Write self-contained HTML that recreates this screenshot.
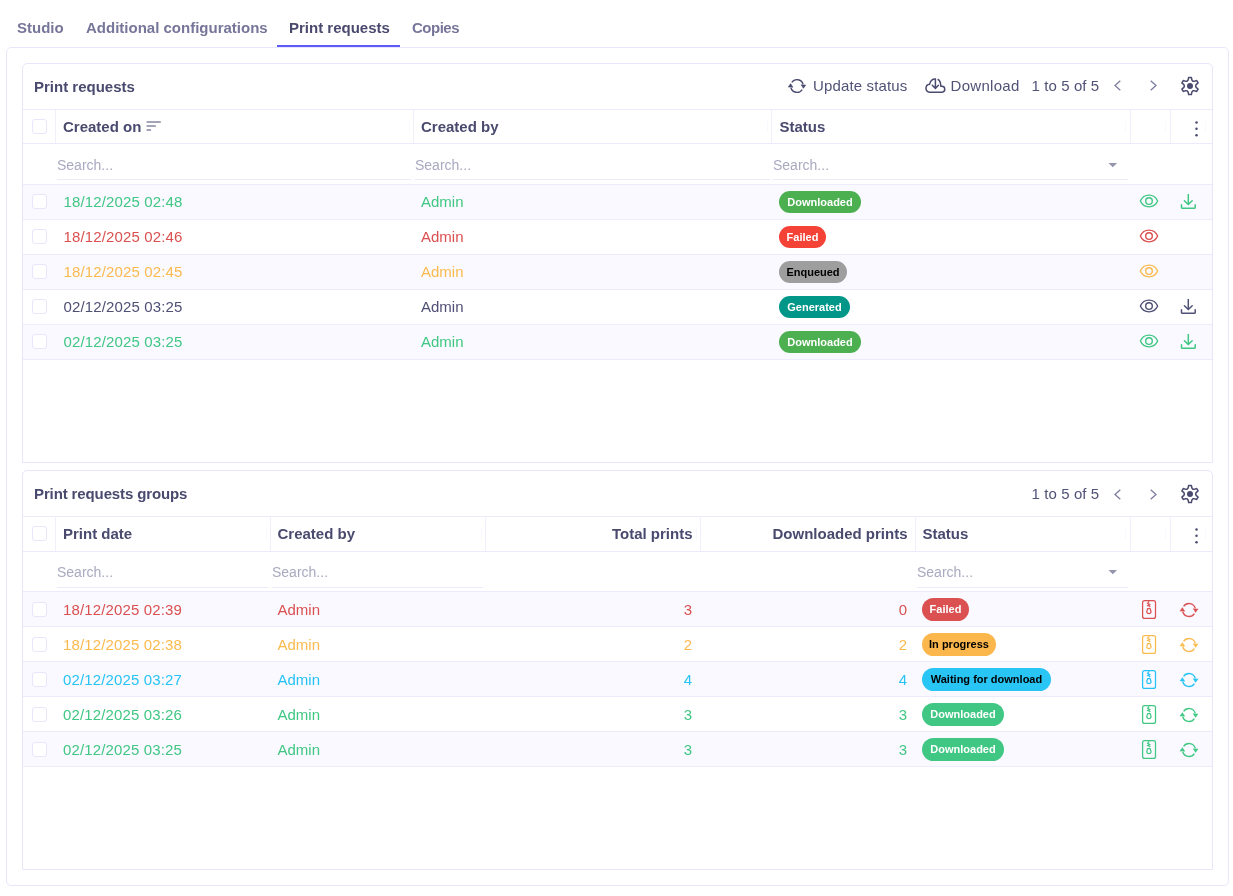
<!DOCTYPE html>
<html><head><meta charset="utf-8"><style>
html,body{margin:0;padding:0;background:#fff;width:1233px;height:896px;overflow:hidden;position:relative}
.a{position:absolute;}
.t{font-family:"Liberation Sans",sans-serif;white-space:nowrap}
svg.a{overflow:visible}
.badge{font:700 11px/22px "Liberation Sans",sans-serif;text-align:center;white-space:nowrap}
</style></head><body>
<div id="root" style="position:absolute;left:0;top:0;width:1233px;height:896px;will-change:transform">
<div class="a t" style="left:17px;top:20px;font-size:15px;line-height:15px;font-weight:700;color:#75769a;">Studio</div>
<div class="a t" style="left:86px;top:20px;font-size:15px;line-height:15px;font-weight:700;color:#75769a;">Additional configurations</div>
<div class="a t" style="left:289px;top:20px;font-size:15px;line-height:15px;font-weight:700;color:#494a6e;">Print requests</div>
<div class="a t" style="left:412px;top:20px;font-size:15px;line-height:15px;font-weight:700;color:#75769a;letter-spacing:-0.5px">Copies</div>
<div class="a" style="left:6px;top:47px;width:1223px;height:839px;border:1px solid #e7e6fb;box-sizing:border-box;border-radius:5px;"></div>
<div class="a" style="left:277px;top:45px;width:123px;height:2px;background:#5d5bf7;"></div>
<div class="a" style="left:22px;top:63px;width:1191px;height:400px;background:#fff;border:1px solid #e7e6fb;box-sizing:border-box;border-radius:5px 5px 0 0;"></div>
<div class="a t" style="left:34px;top:79px;font-size:15px;line-height:15px;font-weight:700;color:#494a6e;letter-spacing:0px">Print requests</div>
<svg class="a" style="left:787.1px;top:76.2px;" width="20" height="20" viewBox="0 0 20 20"><path d="M4.78 6.48 A6.3 6.3 0 0 1 16.06 8.26" fill="none" stroke="#4a4b6e" stroke-width="1.35"/><path d="M15.22 13.52 A6.3 6.3 0 0 1 3.94 11.74" fill="none" stroke="#4a4b6e" stroke-width="1.35"/><path d="M13.95 8.70 L18.85 8.90 L16.40 12.40 Z" fill="#4a4b6e" stroke="#4a4b6e" stroke-width="0.4" stroke-linejoin="round"/><path d="M1.15 11.10 L6.05 11.30 L3.60 7.60 Z" fill="#4a4b6e" stroke="#4a4b6e" stroke-width="0.4" stroke-linejoin="round"/></svg>
<div class="a t" style="left:813px;top:78px;font-size:15px;line-height:15px;font-weight:400;color:#515276;letter-spacing:0.15px">Update status</div>
<svg class="a" style="left:921px;top:73px;" width="26" height="24" viewBox="0 0 26 24"><path d="M16.6 6.3 C18.7 7.2 19.8 9.6 19.8 13.3 L20.6 13.3 A2.95 2.95 0 0 1 21 19.2 H8.2 A4 4 0 0 1 8.6 11.3 C9.3 8.2 11.4 6 14.4 6.1" fill="none" stroke="#4a4b6e" stroke-width="1.5" stroke-linejoin="round"/><path d="M14.4 6.1 V15.3 M11.3 12.2 L14.4 15.4 L17.4 12.2" fill="none" stroke="#4a4b6e" stroke-width="1.5" stroke-linecap="round"/></svg>
<div class="a t" style="left:950.5px;top:78px;font-size:15px;line-height:15px;font-weight:400;color:#515276;letter-spacing:0.3px">Download</div>
<div class="a t" style="left:1031.5px;top:78px;font-size:15px;line-height:15px;font-weight:400;color:#515276;letter-spacing:0.1px">1 to 5 of 5</div>
<svg class="a" style="left:1113.6px;top:80.1px;" width="7" height="11" viewBox="0 0 7 11"><path d="M6.3 0.7 L1 5.5 L6.3 10.3" fill="none" stroke="#7c7d9c" stroke-width="1.3"/></svg>
<svg class="a" style="left:1149.8px;top:80.1px;" width="7" height="11" viewBox="0 0 7 11"><path d="M0.7 0.7 L6 5.5 L0.7 10.3" fill="none" stroke="#7c7d9c" stroke-width="1.3"/></svg>
<svg class="a" style="left:1179.8px;top:75.8px;" width="20" height="20" viewBox="0 0 20 20"><path d="M8.10 4.00 L8.65 1.45 L11.35 1.45 L11.90 4.00 L12.80 5.15 L14.25 5.35 L16.73 4.56 L18.08 6.89 L16.15 8.65 L15.60 10.00 L16.15 11.35 L18.08 13.11 L16.73 15.44 L14.25 14.65 L12.80 14.85 L11.90 16.00 L11.35 18.55 L8.65 18.55 L8.10 16.00 L7.20 14.85 L5.75 14.65 L3.27 15.44 L1.92 13.11 L3.85 11.35 L4.40 10.00 L3.85 8.65 L1.92 6.89 L3.27 4.56 L5.75 5.35 L7.20 5.15 Z" fill="none" stroke="#4a4b6e" stroke-width="1.5" stroke-linejoin="round"/><circle cx="10" cy="10" r="3" fill="#4a4b6e"/></svg>
<div class="a" style="left:23px;top:109px;width:1189px;height:1px;background:#ecebfc;"></div>
<div class="a" style="left:23px;top:143px;width:1189px;height:1px;background:#ecebfc;"></div>
<div class="a" style="left:55px;top:110px;width:1px;height:33px;background:#f0f0fc;"></div>
<div class="a" style="left:413px;top:110px;width:1px;height:33px;background:#f0f0fc;"></div>
<div class="a" style="left:771px;top:110px;width:1px;height:33px;background:#f0f0fc;"></div>
<div class="a" style="left:1130px;top:110px;width:1px;height:33px;background:#f0f0fc;"></div>
<div class="a" style="left:1170px;top:110px;width:1px;height:33px;background:#f0f0fc;"></div>
<div class="a" style="left:409px;top:121px;width:1px;height:11px;background:#f8f8fe;"></div>
<div class="a" style="left:767px;top:121px;width:1px;height:11px;background:#f8f8fe;"></div>
<div class="a" style="left:1125px;top:121px;width:1px;height:11px;background:#f8f8fe;"></div>
<div class="a" style="left:1165px;top:121px;width:1px;height:11px;background:#f8f8fe;"></div>
<div class="a" style="left:1205px;top:121px;width:1px;height:11px;background:#f8f8fe;"></div>
<div class="a" style="left:32px;top:119px;width:15px;height:15px;background:#fff;border:1px solid #e7e6fb;box-sizing:border-box;border-radius:3px;"></div>
<div class="a t" style="left:63px;top:119px;font-size:15px;line-height:15px;font-weight:700;color:#494a6e;">Created on</div>
<div class="a t" style="left:421px;top:119px;font-size:15px;line-height:15px;font-weight:700;color:#494a6e;">Created by</div>
<div class="a t" style="left:779.5px;top:119px;font-size:15px;line-height:15px;font-weight:700;color:#494a6e;">Status</div>
<svg class="a" style="left:1195px;top:120.8px;" width="4" height="16" viewBox="0 0 4 16"><circle cx="1.5" cy="1.50" r="1.25" fill="#4a4b6e"/><circle cx="1.5" cy="7.85" r="1.25" fill="#4a4b6e"/><circle cx="1.5" cy="14.20" r="1.25" fill="#4a4b6e"/></svg>
<div class="a" style="left:23px;top:184px;width:1189px;height:1px;background:#ecebfc;"></div>
<div class="a" style="left:57px;top:179px;width:354px;height:1px;background:#ecebfc;"></div>
<div class="a t" style="left:57px;top:158px;font-size:14px;line-height:14px;font-weight:400;color:#a9a9c0;">Search...</div>
<div class="a" style="left:415px;top:179px;width:355px;height:1px;background:#ecebfc;"></div>
<div class="a t" style="left:415px;top:158px;font-size:14px;line-height:14px;font-weight:400;color:#a9a9c0;">Search...</div>
<div class="a" style="left:773px;top:179px;width:355px;height:1px;background:#ecebfc;"></div>
<div class="a t" style="left:773px;top:158px;font-size:14px;line-height:14px;font-weight:400;color:#a9a9c0;">Search...</div>
<svg class="a" style="left:1108px;top:163px;" width="10" height="6" viewBox="0 0 10 6"><path d="M0.5 0 H9.1 L4.8 4.3 Z" fill="#9494ad"/></svg>
<div class="a" style="left:23px;top:185px;width:1189px;height:34px;background:#f9f9ff;"></div>
<div class="a" style="left:23px;top:219px;width:1189px;height:1px;background:#ecebfc;"></div>
<div class="a" style="left:32px;top:194px;width:15px;height:15px;background:#fff;border:1px solid #e7e6fb;box-sizing:border-box;border-radius:3px;"></div>
<div class="a t" style="left:63.5px;top:194px;font-size:15px;line-height:15px;font-weight:400;color:#40c783;letter-spacing:0.14px">18/12/2025 02:48</div>
<div class="a t" style="left:421px;top:194px;font-size:15px;line-height:15px;font-weight:400;color:#40c783;">Admin</div>
<div class="a badge" style="left:779px;top:191px;width:82px;height:22px;border-radius:11.0px;background:#4caf50;color:#fff">Downloaded</div>
<svg class="a" style="left:1137.8px;top:193.2px;" width="22" height="16" viewBox="0 0 22 16"><path d="M19.65 8.00 C17.73 12.19 14.84 13.85 11.00 13.85 C7.16 13.85 4.27 12.19 2.35 8.00 C4.27 3.81 7.16 2.15 11.00 2.15 C14.84 2.15 17.73 3.81 19.65 8.00 Z" fill="none" stroke="#40c783" stroke-width="1.4" stroke-linejoin="round"/><circle cx="11" cy="8.1" r="3.3" fill="none" stroke="#40c783" stroke-width="1.4"/></svg>
<svg class="a" style="left:1180px;top:193px;" width="17" height="17" viewBox="0 0 17 17"><path d="M8.3 1 V11.3" stroke="#40c783" stroke-width="1.5" fill="none"/><path d="M4.4 7.7 L8.3 11.5 L12.2 7.7" stroke="#40c783" stroke-width="1.5" fill="none" stroke-linecap="round"/><path d="M1.5 11.8 V14.4 Q1.5 15.35 2.5 15.35 H14.2 Q15.2 15.35 15.2 14.4 V11.8" stroke="#40c783" stroke-width="1.5" fill="none" stroke-linecap="round"/></svg>
<div class="a" style="left:23px;top:254px;width:1189px;height:1px;background:#ecebfc;"></div>
<div class="a" style="left:32px;top:229px;width:15px;height:15px;background:#fff;border:1px solid #e7e6fb;box-sizing:border-box;border-radius:3px;"></div>
<div class="a t" style="left:63.5px;top:229px;font-size:15px;line-height:15px;font-weight:400;color:#db5050;letter-spacing:0.14px">18/12/2025 02:46</div>
<div class="a t" style="left:421px;top:229px;font-size:15px;line-height:15px;font-weight:400;color:#db5050;">Admin</div>
<div class="a badge" style="left:779px;top:226px;width:47px;height:22px;border-radius:11.0px;background:#f44336;color:#fff">Failed</div>
<svg class="a" style="left:1137.8px;top:228.2px;" width="22" height="16" viewBox="0 0 22 16"><path d="M19.65 8.00 C17.73 12.19 14.84 13.85 11.00 13.85 C7.16 13.85 4.27 12.19 2.35 8.00 C4.27 3.81 7.16 2.15 11.00 2.15 C14.84 2.15 17.73 3.81 19.65 8.00 Z" fill="none" stroke="#db5050" stroke-width="1.4" stroke-linejoin="round"/><circle cx="11" cy="8.1" r="3.3" fill="none" stroke="#db5050" stroke-width="1.4"/></svg>
<div class="a" style="left:23px;top:255px;width:1189px;height:34px;background:#f9f9ff;"></div>
<div class="a" style="left:23px;top:289px;width:1189px;height:1px;background:#ecebfc;"></div>
<div class="a" style="left:32px;top:264px;width:15px;height:15px;background:#fff;border:1px solid #e7e6fb;box-sizing:border-box;border-radius:3px;"></div>
<div class="a t" style="left:63.5px;top:264px;font-size:15px;line-height:15px;font-weight:400;color:#fbba4e;letter-spacing:0.14px">18/12/2025 02:45</div>
<div class="a t" style="left:421px;top:264px;font-size:15px;line-height:15px;font-weight:400;color:#fbba4e;">Admin</div>
<div class="a badge" style="left:779px;top:261px;width:68px;height:22px;border-radius:11.0px;background:#9e9e9e;color:#000">Enqueued</div>
<svg class="a" style="left:1137.8px;top:263.2px;" width="22" height="16" viewBox="0 0 22 16"><path d="M19.65 8.00 C17.73 12.19 14.84 13.85 11.00 13.85 C7.16 13.85 4.27 12.19 2.35 8.00 C4.27 3.81 7.16 2.15 11.00 2.15 C14.84 2.15 17.73 3.81 19.65 8.00 Z" fill="none" stroke="#fbba4e" stroke-width="1.4" stroke-linejoin="round"/><circle cx="11" cy="8.1" r="3.3" fill="none" stroke="#fbba4e" stroke-width="1.4"/></svg>
<div class="a" style="left:23px;top:324px;width:1189px;height:1px;background:#ecebfc;"></div>
<div class="a" style="left:32px;top:299px;width:15px;height:15px;background:#fff;border:1px solid #e7e6fb;box-sizing:border-box;border-radius:3px;"></div>
<div class="a t" style="left:63.5px;top:299px;font-size:15px;line-height:15px;font-weight:400;color:#4f5075;letter-spacing:0.14px">02/12/2025 03:25</div>
<div class="a t" style="left:421px;top:299px;font-size:15px;line-height:15px;font-weight:400;color:#4f5075;">Admin</div>
<div class="a badge" style="left:779px;top:296px;width:71px;height:22px;border-radius:11.0px;background:#009688;color:#fff">Generated</div>
<svg class="a" style="left:1137.8px;top:298.2px;" width="22" height="16" viewBox="0 0 22 16"><path d="M19.65 8.00 C17.73 12.19 14.84 13.85 11.00 13.85 C7.16 13.85 4.27 12.19 2.35 8.00 C4.27 3.81 7.16 2.15 11.00 2.15 C14.84 2.15 17.73 3.81 19.65 8.00 Z" fill="none" stroke="#4f5075" stroke-width="1.4" stroke-linejoin="round"/><circle cx="11" cy="8.1" r="3.3" fill="none" stroke="#4f5075" stroke-width="1.4"/></svg>
<svg class="a" style="left:1180px;top:298px;" width="17" height="17" viewBox="0 0 17 17"><path d="M8.3 1 V11.3" stroke="#4f5075" stroke-width="1.5" fill="none"/><path d="M4.4 7.7 L8.3 11.5 L12.2 7.7" stroke="#4f5075" stroke-width="1.5" fill="none" stroke-linecap="round"/><path d="M1.5 11.8 V14.4 Q1.5 15.35 2.5 15.35 H14.2 Q15.2 15.35 15.2 14.4 V11.8" stroke="#4f5075" stroke-width="1.5" fill="none" stroke-linecap="round"/></svg>
<div class="a" style="left:23px;top:325px;width:1189px;height:34px;background:#f9f9ff;"></div>
<div class="a" style="left:23px;top:359px;width:1189px;height:1px;background:#ecebfc;"></div>
<div class="a" style="left:32px;top:334px;width:15px;height:15px;background:#fff;border:1px solid #e7e6fb;box-sizing:border-box;border-radius:3px;"></div>
<div class="a t" style="left:63.5px;top:334px;font-size:15px;line-height:15px;font-weight:400;color:#40c783;letter-spacing:0.14px">02/12/2025 03:25</div>
<div class="a t" style="left:421px;top:334px;font-size:15px;line-height:15px;font-weight:400;color:#40c783;">Admin</div>
<div class="a badge" style="left:779px;top:331px;width:82px;height:22px;border-radius:11.0px;background:#4caf50;color:#fff">Downloaded</div>
<svg class="a" style="left:1137.8px;top:333.2px;" width="22" height="16" viewBox="0 0 22 16"><path d="M19.65 8.00 C17.73 12.19 14.84 13.85 11.00 13.85 C7.16 13.85 4.27 12.19 2.35 8.00 C4.27 3.81 7.16 2.15 11.00 2.15 C14.84 2.15 17.73 3.81 19.65 8.00 Z" fill="none" stroke="#40c783" stroke-width="1.4" stroke-linejoin="round"/><circle cx="11" cy="8.1" r="3.3" fill="none" stroke="#40c783" stroke-width="1.4"/></svg>
<svg class="a" style="left:1180px;top:333px;" width="17" height="17" viewBox="0 0 17 17"><path d="M8.3 1 V11.3" stroke="#40c783" stroke-width="1.5" fill="none"/><path d="M4.4 7.7 L8.3 11.5 L12.2 7.7" stroke="#40c783" stroke-width="1.5" fill="none" stroke-linecap="round"/><path d="M1.5 11.8 V14.4 Q1.5 15.35 2.5 15.35 H14.2 Q15.2 15.35 15.2 14.4 V11.8" stroke="#40c783" stroke-width="1.5" fill="none" stroke-linecap="round"/></svg>
<svg class="a" style="left:146px;top:121.05px;" width="16" height="10" viewBox="0 0 16 10"><path d="M1 1 H14.4 M1 5 H9.4 M1 9 H4.6" stroke="#494a6e" stroke-width="1.15" stroke-linecap="round" fill="none"/></svg>
<div class="a" style="left:22px;top:470px;width:1191px;height:400px;background:#fff;border:1px solid #e7e6fb;box-sizing:border-box;border-radius:5px 5px 0 0;"></div>
<div class="a t" style="left:34px;top:486px;font-size:15px;line-height:15px;font-weight:700;color:#494a6e;letter-spacing:-0.12px">Print requests groups</div>
<div class="a t" style="left:1031.5px;top:486px;font-size:15px;line-height:15px;font-weight:400;color:#515276;letter-spacing:0.1px">1 to 5 of 5</div>
<svg class="a" style="left:1113.6px;top:488.6px;" width="7" height="11" viewBox="0 0 7 11"><path d="M6.3 0.7 L1 5.5 L6.3 10.3" fill="none" stroke="#7c7d9c" stroke-width="1.3"/></svg>
<svg class="a" style="left:1149.8px;top:488.6px;" width="7" height="11" viewBox="0 0 7 11"><path d="M0.7 0.7 L6 5.5 L0.7 10.3" fill="none" stroke="#7c7d9c" stroke-width="1.3"/></svg>
<svg class="a" style="left:1179.8px;top:483.75px;" width="20" height="20" viewBox="0 0 20 20"><path d="M8.10 4.00 L8.65 1.45 L11.35 1.45 L11.90 4.00 L12.80 5.15 L14.25 5.35 L16.73 4.56 L18.08 6.89 L16.15 8.65 L15.60 10.00 L16.15 11.35 L18.08 13.11 L16.73 15.44 L14.25 14.65 L12.80 14.85 L11.90 16.00 L11.35 18.55 L8.65 18.55 L8.10 16.00 L7.20 14.85 L5.75 14.65 L3.27 15.44 L1.92 13.11 L3.85 11.35 L4.40 10.00 L3.85 8.65 L1.92 6.89 L3.27 4.56 L5.75 5.35 L7.20 5.15 Z" fill="none" stroke="#4a4b6e" stroke-width="1.5" stroke-linejoin="round"/><circle cx="10" cy="10" r="3" fill="#4a4b6e"/></svg>
<div class="a" style="left:23px;top:516px;width:1189px;height:1px;background:#ecebfc;"></div>
<div class="a" style="left:23px;top:551px;width:1189px;height:1px;background:#ecebfc;"></div>
<div class="a" style="left:55px;top:517px;width:1px;height:34px;background:#f0f0fc;"></div>
<div class="a" style="left:270px;top:517px;width:1px;height:34px;background:#f0f0fc;"></div>
<div class="a" style="left:485px;top:517px;width:1px;height:34px;background:#f0f0fc;"></div>
<div class="a" style="left:700px;top:517px;width:1px;height:34px;background:#f0f0fc;"></div>
<div class="a" style="left:915px;top:517px;width:1px;height:34px;background:#f0f0fc;"></div>
<div class="a" style="left:1130px;top:517px;width:1px;height:34px;background:#f0f0fc;"></div>
<div class="a" style="left:1170px;top:517px;width:1px;height:34px;background:#f0f0fc;"></div>
<div class="a" style="left:266px;top:528px;width:1px;height:11px;background:#f8f8fe;"></div>
<div class="a" style="left:481px;top:528px;width:1px;height:11px;background:#f8f8fe;"></div>
<div class="a" style="left:696px;top:528px;width:1px;height:11px;background:#f8f8fe;"></div>
<div class="a" style="left:911px;top:528px;width:1px;height:11px;background:#f8f8fe;"></div>
<div class="a" style="left:1125px;top:528px;width:1px;height:11px;background:#f8f8fe;"></div>
<div class="a" style="left:1165px;top:528px;width:1px;height:11px;background:#f8f8fe;"></div>
<div class="a" style="left:1205px;top:528px;width:1px;height:11px;background:#f8f8fe;"></div>
<div class="a" style="left:32px;top:526px;width:15px;height:15px;background:#fff;border:1px solid #e7e6fb;box-sizing:border-box;border-radius:3px;"></div>
<div class="a t" style="left:63px;top:526px;font-size:15px;line-height:15px;font-weight:700;color:#494a6e;">Print date</div>
<div class="a t" style="left:277.5px;top:526px;font-size:15px;line-height:15px;font-weight:700;color:#494a6e;">Created by</div>
<div class="a t" style="right:540.5px;top:526px;font-size:15px;line-height:15px;font-weight:700;color:#494a6e;text-align:right;">Total prints</div>
<div class="a t" style="right:325.5px;top:526px;font-size:15px;line-height:15px;font-weight:700;color:#494a6e;text-align:right;">Downloaded prints</div>
<div class="a t" style="left:922.5px;top:526px;font-size:15px;line-height:15px;font-weight:700;color:#494a6e;">Status</div>
<svg class="a" style="left:1195px;top:527.8px;" width="4" height="16" viewBox="0 0 4 16"><circle cx="1.5" cy="1.50" r="1.25" fill="#4a4b6e"/><circle cx="1.5" cy="7.85" r="1.25" fill="#4a4b6e"/><circle cx="1.5" cy="14.20" r="1.25" fill="#4a4b6e"/></svg>
<div class="a" style="left:23px;top:591px;width:1189px;height:1px;background:#ecebfc;"></div>
<div class="a" style="left:57px;top:587px;width:211px;height:1px;background:#ecebfc;"></div>
<div class="a t" style="left:57px;top:565px;font-size:14px;line-height:14px;font-weight:400;color:#a9a9c0;">Search...</div>
<div class="a" style="left:272px;top:587px;width:211px;height:1px;background:#ecebfc;"></div>
<div class="a t" style="left:272px;top:565px;font-size:14px;line-height:14px;font-weight:400;color:#a9a9c0;">Search...</div>
<div class="a" style="left:917px;top:587px;width:211px;height:1px;background:#ecebfc;"></div>
<div class="a t" style="left:917px;top:565px;font-size:14px;line-height:14px;font-weight:400;color:#a9a9c0;">Search...</div>
<svg class="a" style="left:1108px;top:570px;" width="10" height="6" viewBox="0 0 10 6"><path d="M0.5 0 H9.1 L4.8 4.3 Z" fill="#9494ad"/></svg>
<div class="a" style="left:23px;top:592px;width:1189px;height:34px;background:#f9f9ff;"></div>
<div class="a" style="left:23px;top:626px;width:1189px;height:1px;background:#ecebfc;"></div>
<div class="a" style="left:32px;top:602px;width:15px;height:15px;background:#fff;border:1px solid #e7e6fb;box-sizing:border-box;border-radius:3px;"></div>
<div class="a t" style="left:63px;top:602px;font-size:15px;line-height:15px;font-weight:400;color:#db5050;letter-spacing:0.14px">18/12/2025 02:39</div>
<div class="a t" style="left:277.5px;top:602px;font-size:15px;line-height:15px;font-weight:400;color:#db5050;">Admin</div>
<div class="a t" style="right:541px;top:602px;font-size:15px;line-height:15px;font-weight:400;color:#db5050;text-align:right;">3</div>
<div class="a t" style="right:326px;top:602px;font-size:15px;line-height:15px;font-weight:400;color:#db5050;text-align:right;">0</div>
<div class="a badge" style="left:922px;top:598px;width:47px;height:23px;border-radius:11.5px;background:#db5050;color:#fff">Failed</div>
<svg class="a" style="left:1141.8px;top:599.9px;" width="15" height="20" viewBox="0 0 15 20"><rect x="0.6" y="0.6" width="12.9" height="17.8" rx="2" fill="none" stroke="#db5050" stroke-width="1.25"/><path d="M5.9 0.9 H7.9 L6.9 2.1 Z" fill="#db5050"/><path d="M6.95 1.8 L5.3 3.35 L8.05 4.6 L5.3 5.5 L8.05 6.35 L6.95 7.2" fill="none" stroke="#db5050" stroke-width="1.05" stroke-linejoin="round"/><path d="M5.6 8.7 H8.2 L9.1 12 A2.3 2.3 0 0 1 4.7 12 Z" fill="none" stroke="#db5050" stroke-width="1.2" stroke-linejoin="round"/></svg>
<svg class="a" style="left:1178.9px;top:599.5px;" width="20" height="20" viewBox="0 0 20 20"><path d="M4.61 6.37 A6.5 6.5 0 0 1 16.25 8.21" fill="none" stroke="#db5050" stroke-width="1.35"/><path d="M15.39 13.63 A6.5 6.5 0 0 1 3.75 11.79" fill="none" stroke="#db5050" stroke-width="1.35"/><path d="M14.15 8.70 L19.05 8.90 L16.60 12.40 Z" fill="#db5050" stroke="#db5050" stroke-width="0.4" stroke-linejoin="round"/><path d="M0.95 11.10 L5.85 11.30 L3.40 7.60 Z" fill="#db5050" stroke="#db5050" stroke-width="0.4" stroke-linejoin="round"/></svg>
<div class="a" style="left:23px;top:661px;width:1189px;height:1px;background:#ecebfc;"></div>
<div class="a" style="left:32px;top:637px;width:15px;height:15px;background:#fff;border:1px solid #e7e6fb;box-sizing:border-box;border-radius:3px;"></div>
<div class="a t" style="left:63px;top:637px;font-size:15px;line-height:15px;font-weight:400;color:#fbba4e;letter-spacing:0.14px">18/12/2025 02:38</div>
<div class="a t" style="left:277.5px;top:637px;font-size:15px;line-height:15px;font-weight:400;color:#fbba4e;">Admin</div>
<div class="a t" style="right:541px;top:637px;font-size:15px;line-height:15px;font-weight:400;color:#fbba4e;text-align:right;">2</div>
<div class="a t" style="right:326px;top:637px;font-size:15px;line-height:15px;font-weight:400;color:#fbba4e;text-align:right;">2</div>
<div class="a badge" style="left:922px;top:633px;width:74px;height:23px;border-radius:11.5px;background:#fbb74c;color:#000">In progress</div>
<svg class="a" style="left:1141.8px;top:634.9px;" width="15" height="20" viewBox="0 0 15 20"><rect x="0.6" y="0.6" width="12.9" height="17.8" rx="2" fill="none" stroke="#fbba4e" stroke-width="1.25"/><path d="M5.9 0.9 H7.9 L6.9 2.1 Z" fill="#fbba4e"/><path d="M6.95 1.8 L5.3 3.35 L8.05 4.6 L5.3 5.5 L8.05 6.35 L6.95 7.2" fill="none" stroke="#fbba4e" stroke-width="1.05" stroke-linejoin="round"/><path d="M5.6 8.7 H8.2 L9.1 12 A2.3 2.3 0 0 1 4.7 12 Z" fill="none" stroke="#fbba4e" stroke-width="1.2" stroke-linejoin="round"/></svg>
<svg class="a" style="left:1178.9px;top:634.5px;" width="20" height="20" viewBox="0 0 20 20"><path d="M4.61 6.37 A6.5 6.5 0 0 1 16.25 8.21" fill="none" stroke="#fbba4e" stroke-width="1.35"/><path d="M15.39 13.63 A6.5 6.5 0 0 1 3.75 11.79" fill="none" stroke="#fbba4e" stroke-width="1.35"/><path d="M14.15 8.70 L19.05 8.90 L16.60 12.40 Z" fill="#fbba4e" stroke="#fbba4e" stroke-width="0.4" stroke-linejoin="round"/><path d="M0.95 11.10 L5.85 11.30 L3.40 7.60 Z" fill="#fbba4e" stroke="#fbba4e" stroke-width="0.4" stroke-linejoin="round"/></svg>
<div class="a" style="left:23px;top:662px;width:1189px;height:34px;background:#f9f9ff;"></div>
<div class="a" style="left:23px;top:696px;width:1189px;height:1px;background:#ecebfc;"></div>
<div class="a" style="left:32px;top:672px;width:15px;height:15px;background:#fff;border:1px solid #e7e6fb;box-sizing:border-box;border-radius:3px;"></div>
<div class="a t" style="left:63px;top:672px;font-size:15px;line-height:15px;font-weight:400;color:#27c3f5;letter-spacing:0.14px">02/12/2025 03:27</div>
<div class="a t" style="left:277.5px;top:672px;font-size:15px;line-height:15px;font-weight:400;color:#27c3f5;">Admin</div>
<div class="a t" style="right:541px;top:672px;font-size:15px;line-height:15px;font-weight:400;color:#27c3f5;text-align:right;">4</div>
<div class="a t" style="right:326px;top:672px;font-size:15px;line-height:15px;font-weight:400;color:#27c3f5;text-align:right;">4</div>
<div class="a badge" style="left:922px;top:668px;width:129px;height:23px;border-radius:11.5px;background:#28c5f5;color:#000">Waiting for download</div>
<svg class="a" style="left:1141.8px;top:669.9px;" width="15" height="20" viewBox="0 0 15 20"><rect x="0.6" y="0.6" width="12.9" height="17.8" rx="2" fill="none" stroke="#27c3f5" stroke-width="1.25"/><path d="M5.9 0.9 H7.9 L6.9 2.1 Z" fill="#27c3f5"/><path d="M6.95 1.8 L5.3 3.35 L8.05 4.6 L5.3 5.5 L8.05 6.35 L6.95 7.2" fill="none" stroke="#27c3f5" stroke-width="1.05" stroke-linejoin="round"/><path d="M5.6 8.7 H8.2 L9.1 12 A2.3 2.3 0 0 1 4.7 12 Z" fill="none" stroke="#27c3f5" stroke-width="1.2" stroke-linejoin="round"/></svg>
<svg class="a" style="left:1178.9px;top:669.5px;" width="20" height="20" viewBox="0 0 20 20"><path d="M4.61 6.37 A6.5 6.5 0 0 1 16.25 8.21" fill="none" stroke="#27c3f5" stroke-width="1.35"/><path d="M15.39 13.63 A6.5 6.5 0 0 1 3.75 11.79" fill="none" stroke="#27c3f5" stroke-width="1.35"/><path d="M14.15 8.70 L19.05 8.90 L16.60 12.40 Z" fill="#27c3f5" stroke="#27c3f5" stroke-width="0.4" stroke-linejoin="round"/><path d="M0.95 11.10 L5.85 11.30 L3.40 7.60 Z" fill="#27c3f5" stroke="#27c3f5" stroke-width="0.4" stroke-linejoin="round"/></svg>
<div class="a" style="left:23px;top:731px;width:1189px;height:1px;background:#ecebfc;"></div>
<div class="a" style="left:32px;top:707px;width:15px;height:15px;background:#fff;border:1px solid #e7e6fb;box-sizing:border-box;border-radius:3px;"></div>
<div class="a t" style="left:63px;top:707px;font-size:15px;line-height:15px;font-weight:400;color:#40c783;letter-spacing:0.14px">02/12/2025 03:26</div>
<div class="a t" style="left:277.5px;top:707px;font-size:15px;line-height:15px;font-weight:400;color:#40c783;">Admin</div>
<div class="a t" style="right:541px;top:707px;font-size:15px;line-height:15px;font-weight:400;color:#40c783;text-align:right;">3</div>
<div class="a t" style="right:326px;top:707px;font-size:15px;line-height:15px;font-weight:400;color:#40c783;text-align:right;">3</div>
<div class="a badge" style="left:922px;top:703px;width:82px;height:23px;border-radius:11.5px;background:#40c783;color:#fff">Downloaded</div>
<svg class="a" style="left:1141.8px;top:704.9px;" width="15" height="20" viewBox="0 0 15 20"><rect x="0.6" y="0.6" width="12.9" height="17.8" rx="2" fill="none" stroke="#40c783" stroke-width="1.25"/><path d="M5.9 0.9 H7.9 L6.9 2.1 Z" fill="#40c783"/><path d="M6.95 1.8 L5.3 3.35 L8.05 4.6 L5.3 5.5 L8.05 6.35 L6.95 7.2" fill="none" stroke="#40c783" stroke-width="1.05" stroke-linejoin="round"/><path d="M5.6 8.7 H8.2 L9.1 12 A2.3 2.3 0 0 1 4.7 12 Z" fill="none" stroke="#40c783" stroke-width="1.2" stroke-linejoin="round"/></svg>
<svg class="a" style="left:1178.9px;top:704.5px;" width="20" height="20" viewBox="0 0 20 20"><path d="M4.61 6.37 A6.5 6.5 0 0 1 16.25 8.21" fill="none" stroke="#40c783" stroke-width="1.35"/><path d="M15.39 13.63 A6.5 6.5 0 0 1 3.75 11.79" fill="none" stroke="#40c783" stroke-width="1.35"/><path d="M14.15 8.70 L19.05 8.90 L16.60 12.40 Z" fill="#40c783" stroke="#40c783" stroke-width="0.4" stroke-linejoin="round"/><path d="M0.95 11.10 L5.85 11.30 L3.40 7.60 Z" fill="#40c783" stroke="#40c783" stroke-width="0.4" stroke-linejoin="round"/></svg>
<div class="a" style="left:23px;top:732px;width:1189px;height:34px;background:#f9f9ff;"></div>
<div class="a" style="left:23px;top:766px;width:1189px;height:1px;background:#ecebfc;"></div>
<div class="a" style="left:32px;top:742px;width:15px;height:15px;background:#fff;border:1px solid #e7e6fb;box-sizing:border-box;border-radius:3px;"></div>
<div class="a t" style="left:63px;top:742px;font-size:15px;line-height:15px;font-weight:400;color:#40c783;letter-spacing:0.14px">02/12/2025 03:25</div>
<div class="a t" style="left:277.5px;top:742px;font-size:15px;line-height:15px;font-weight:400;color:#40c783;">Admin</div>
<div class="a t" style="right:541px;top:742px;font-size:15px;line-height:15px;font-weight:400;color:#40c783;text-align:right;">3</div>
<div class="a t" style="right:326px;top:742px;font-size:15px;line-height:15px;font-weight:400;color:#40c783;text-align:right;">3</div>
<div class="a badge" style="left:922px;top:738px;width:82px;height:23px;border-radius:11.5px;background:#40c783;color:#fff">Downloaded</div>
<svg class="a" style="left:1141.8px;top:739.9px;" width="15" height="20" viewBox="0 0 15 20"><rect x="0.6" y="0.6" width="12.9" height="17.8" rx="2" fill="none" stroke="#40c783" stroke-width="1.25"/><path d="M5.9 0.9 H7.9 L6.9 2.1 Z" fill="#40c783"/><path d="M6.95 1.8 L5.3 3.35 L8.05 4.6 L5.3 5.5 L8.05 6.35 L6.95 7.2" fill="none" stroke="#40c783" stroke-width="1.05" stroke-linejoin="round"/><path d="M5.6 8.7 H8.2 L9.1 12 A2.3 2.3 0 0 1 4.7 12 Z" fill="none" stroke="#40c783" stroke-width="1.2" stroke-linejoin="round"/></svg>
<svg class="a" style="left:1178.9px;top:739.5px;" width="20" height="20" viewBox="0 0 20 20"><path d="M4.61 6.37 A6.5 6.5 0 0 1 16.25 8.21" fill="none" stroke="#40c783" stroke-width="1.35"/><path d="M15.39 13.63 A6.5 6.5 0 0 1 3.75 11.79" fill="none" stroke="#40c783" stroke-width="1.35"/><path d="M14.15 8.70 L19.05 8.90 L16.60 12.40 Z" fill="#40c783" stroke="#40c783" stroke-width="0.4" stroke-linejoin="round"/><path d="M0.95 11.10 L5.85 11.30 L3.40 7.60 Z" fill="#40c783" stroke="#40c783" stroke-width="0.4" stroke-linejoin="round"/></svg>
</div>
</body></html>
